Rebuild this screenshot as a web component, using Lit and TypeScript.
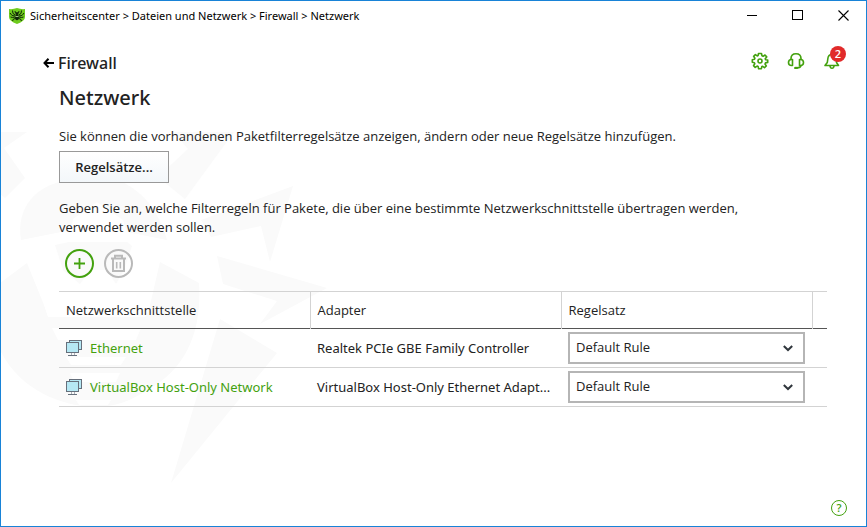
import { LitElement, html, css } from "lit";
import { customElement } from "lit/decorators.js";

interface Row { name: string; adapter: string; rule: string; }

const rows: Row[] = [
  { name: "Ethernet", adapter: "Realtek PCIe GBE Family Controller", rule: "Default Rule" },
  { name: "VirtualBox Host-Only Network", adapter: "VirtualBox Host-Only Ethernet Adapt...", rule: "Default Rule" },
];

const monitors = html`<svg viewBox="0 0 16 16" width="16" height="16" aria-hidden="true" shape-rendering="crispEdges" fill="#b5e8f4" stroke="#66707c">
  <path d="M3.5.5h12v9h-12z"/><path d="M.5 2.5h12v10h-12z"/>
  <path d="M5.5 13v2M8.5 13v2" stroke="#a9b1ba"/><path d="M2 15.5h9"/></svg>`;

const watermark = html`<svg class="mark" width="340" height="490" viewBox="0 0 340 490" aria-hidden="true">
  <path d="M0 132H27L4 148L25 178L5 198L0 194Z"/>
  <path d="M174 132H234L185 199L158 177L188 149Z"/>
  <path d="M21 240C16 207 36 187 63 181C83 174 110 174 126 184C144 194 159 211 167 240L127 232L123 220L97 202L73 219L71 230Z"/>
  <path d="M55 245L69 242H127L132 246L124 270L116 284L107 270H90L80 284L63 270Z"/>
  <path d="M0 283L27 263L44 305H150L160 262L199 283C202 330 187 368 149 389C130 402 112 407 96 407C60 406 20 390 0 350Z"/>
  <g fill="#fff"><path d="M44 305H150L146 317H48Z"/><path d="M52 328H141L136 340H58Z"/><path d="M66 357H126L121 365H71Z"/><path d="M70 373H120L116 382H74Z"/><path d="M76 400H111L108 405H79Z"/></g>
  <path d="M293 186L201 220L211 237L261 226L270 262Z"/>
  <path d="M217 256L327 288L260 324L277 301L223 284Z"/>
  <path d="M220 319L277 353L171 483Z"/>
</svg>`;

const shield = html`<svg width="16" height="16" viewBox="0 0 16 16" aria-hidden="true">
  <path d="M0 1Q4 1.500 8 0Q12 1.500 16 1V9Q16 13 8 16Q0 13 0 9Z" fill="#6ecb1d"/>
  <g stroke="#10240a" fill="none" stroke-width="1"><path d="M6.500 7L4 5.500L3.500 2.500M9.500 7L12 5.500L12.500 2.500M6 8L3 7.500L1 5M10 8L13 7.500L15 5M6 9L3.500 9.500L1.500 9M10 9L12.500 9.500L14.500 9M6.500 10.500L4.500 11L3.500 13M9.500 10.500L11.500 11L12.500 13M6.500 5L6 3M9.500 5L10 3"/></g>
  <ellipse cx="8" cy="9.500" rx="2" ry="2.800" fill="#10240a"/><circle cx="8" cy="5.500" r="1.500" fill="#10240a"/>
  <path d="M6.500 8.500H9.500" stroke="#c9f3a3" stroke-width=".8"/>
</svg>`;

const gear = html`<svg class="line" width="18" height="18" viewBox="0 0 18 18" aria-hidden="true">
  <path d="M7.500 1.500H10.500L11 3.800L12.100 4.300L14 3L15.700 4.900L14.200 6.800L14.600 7.700L16.700 8V10.400L14.500 10.900L14 12L15.300 14L13.500 15.600L11.700 14.300L10.800 14.600L10.400 16.700H7.600L7.100 14.500L6.100 14.100L4.200 15.400L2.500 13.600L3.800 11.700L3.400 10.700L1.300 10.300V7.700L3.500 7.200L3.900 6.200L2.600 4.300L4.400 2.600L6.200 3.900L7.100 3.500Z"/>
  <circle cx="9" cy="9" r="2"/></svg>`;

const headset = html`<svg class="line" width="18" height="18" viewBox="0 0 18 18" aria-hidden="true">
  <path d="M4 8V6.500C4 3.500 6 1.700 9 1.700S14 3.500 14 6.500V8"/>
  <path d="M5.500 7.500V13.500H4.500C2.500 13.500 1.500 12.200 1.500 10.500S2.500 7.500 4.500 7.500ZM12.500 7.500V13.500H13.500C15.500 13.500 16.500 12.200 16.500 10.500S15.500 7.500 13.500 7.500Z"/>
  <path d="M14 13.500Q13.500 15.800 10 15.900"/><ellipse cx="9" cy="15.900" rx="2" ry="1.200" fill="#43a10e" stroke="none"/></svg>`;

const bell = html`<svg class="line" width="18" height="18" viewBox="0 0 18 18" aria-hidden="true">
  <path d="M2 13.500H15.500L13.500 10.500V7C13.500 4 11.500 2.500 9 2.500S5 4 4.800 7L4.300 10.500Z"/>
  <path d="M7 14Q7.300 16.300 9 16.300T11 14"/></svg>`;

@customElement("app-root")
export class AppRoot extends LitElement {
  static styles = css`
    :host { display: block; font-family: "Open Sans", "Noto Sans", sans-serif; color: #222; }
    * { box-sizing: border-box; }
    svg { display: block; }
    button { font: inherit; color: inherit; background: none; border: 0; padding: 0; }
    .window { position: relative; min-height: 100vh; border: 1px solid #1883d7; background: #fff; display: flex; flex-direction: column; overflow: hidden; }
    .mark { position: absolute; left: -1px; top: -1px; fill: #fafafa; pointer-events: none; }
    .line { fill: none; stroke: #43a10e; stroke-width: 1.6; stroke-linejoin: round; }
    .titlebar { display: flex; align-items: center; height: 29px; padding-left: 8px; gap: 5px; font-family: "Noto Sans", sans-serif; font-size: 11px; color: #000; }
    .path { flex: 1; }
    .controls { display: flex; }
    .win { width: 46px; height: 28px; display: grid; place-items: center; }
    .top { display: flex; align-items: center; height: 24px; margin: 21px 25px 0 41px; }
    .back { display: flex; align-items: center; gap: 4px; font-family: "Noto Sans", sans-serif; font-size: 16px; line-height: 24px; font-weight: 500; }
    .actions { margin-left: auto; display: flex; gap: 18px; }
    .icon { position: relative; width: 18px; height: 18px; margin-bottom: 4px; }
    .badge { position: absolute; left: 7px; top: -6px; width: 16px; height: 16px; border-radius: 50%; background: #e12a2a; color: #fff; font-size: 11px; line-height: 16px; font-weight: 600; text-align: center; }
    main { position: relative; flex: 1; padding: 0 39px 0 58px; font-size: 13px; line-height: 19px; }
    h1 { margin: 7px 0 13px; font-family: "Noto Sans", sans-serif; font-size: 20px; line-height: 32px; font-weight: 500; }
    p { margin: 0; max-width: 700px; }
    .sets { display: block; margin: 5px 0 16px; width: 110px; height: 32px; border: 1px solid #999; background: linear-gradient(#fff, #f3f7fa); font-weight: 600; }
    .tools { display: flex; gap: 10px; padding: 12px 6px; }
    .tools button { width: 29px; height: 30px; }
    table { width: 100%; border-collapse: collapse; table-layout: fixed; border-top: 1px solid #d3d3d3; }
    th, .fill { height: 37px; text-align: left; font-weight: 400; padding: 0 0 0 7px; border-right: 1px solid #d3d3d3; }
    thead { border-bottom: 1px solid #555; }
    .fill, td:last-child { border-right: 0; padding: 0; }
    tbody td { height: 39px; padding: 0 0 0 7px; border-bottom: 1px solid #d3d3d3; white-space: nowrap; font-family: "Noto Sans", sans-serif; }
    td a { display: flex; align-items: center; gap: 8px; color: #43a10e; text-decoration: none; }
    .data { width: 251px; }
    .end { width: auto; }
    .pick { position: relative; display: flex; align-items: center; width: 237px; }
    select { appearance: none; width: 100%; height: 32px; border: 2px solid #b5b5b5; border-radius: 0; background: #fff; font: inherit; font-family: "Open Sans", sans-serif; color: inherit; padding: 0 6px 2px; }
    .pick svg { position: absolute; right: 12px; pointer-events: none; }
    footer { position: relative; display: flex; justify-content: flex-end; padding: 0 19px 10px; }
    .help { width: 16px; height: 16px; border: 1px solid #43a10e; border-radius: 50%; color: #43a10e; font-size: 11px; line-height: 14px; font-weight: 600; }
  `;

  render() {
    return html`<div class="window">
      ${watermark}
      <header class="titlebar">
        ${shield}<span class="path">Sicherheitscenter &gt; Dateien und Netzwerk &gt; Firewall &gt; Netzwerk</span>
        <div class="controls">
          <button class="win" aria-label="Minimieren"><svg width="11" height="11" shape-rendering="crispEdges"><path d="M1 5.500H11" stroke="#000"/></svg></button>
          <button class="win" aria-label="Maximieren"><svg width="11" height="11" shape-rendering="crispEdges"><path d="M.5.5H10.500V9.500H.5Z" fill="none" stroke="#000"/></svg></button>
          <button class="win" aria-label="Schließen"><svg width="11" height="11"><path d="M.5.500L10.500 10.500M10.500.500L.5 10.500" stroke="#000" stroke-width="1.100"/></svg></button>
        </div>
      </header>
      <nav class="top">
        <button class="back"><svg width="12" height="10" viewBox="0 0 12 10" fill="none" stroke="#000" stroke-width="2" aria-hidden="true"><path d="M6.500.8L2.500 5L6.500 9.200M2.500 5H12"/></svg>Firewall</button>
        <div class="actions">
          <button class="icon" aria-label="Einstellungen">${gear}</button>
          <button class="icon" aria-label="Support">${headset}</button>
          <button class="icon" aria-label="Benachrichtigungen">${bell}<span class="badge">2</span></button>
        </div>
      </nav>
      <main>
        <h1>Netzwerk</h1>
        <p>Sie können die vorhandenen Paketfilterregelsätze anzeigen, ändern oder neue Regelsätze hinzufügen.</p>
        <button class="sets">Regelsätze...</button>
        <p>Geben Sie an, welche Filterregeln für Pakete, die über eine bestimmte Netzwerkschnittstelle übertragen werden, verwendet werden sollen.</p>
        <div class="tools">
          <button aria-label="Hinzufügen"><svg width="29" height="30" viewBox="0 0 29 30" fill="none" stroke="#43a10e" stroke-width="2"><circle cx="14.500" cy="14.500" r="13.500"/><path d="M9 14.500H20M14.500 9V20" stroke-width="1.800"/></svg></button>
          <button aria-label="Löschen" disabled><svg width="29" height="30" viewBox="0 0 29 30" fill="none" stroke="#b9b9b9" stroke-width="2"><circle cx="14.500" cy="14.500" r="13.500"/><path d="M7 9.500H22M11 9V6.800H18V9M9 10V22H20V10"/><path d="M12.700 13V19.500M16.300 13V19.500" stroke-width="1.600"/></svg></button>
        </div>
        <table>
          <colgroup><col class="data"><col class="data"><col class="data"><col class="end"></colgroup>
          <thead><tr><th scope="col">Netzwerkschnittstelle</th><th scope="col">Adapter</th><th scope="col">Regelsatz</th><td class="fill"></td></tr></thead>
          <tbody>${rows.map(r => html`<tr>
            <td><a href="#">${monitors}${r.name}</a></td>
            <td>${r.adapter}</td>
            <td><span class="pick"><select aria-label="Regelsatz für ${r.name}"><option>${r.rule}</option></select>
              <svg width="10" height="7" viewBox="0 0 10 7" fill="none" stroke="#30363c" stroke-width="2" aria-hidden="true"><path d="M.8 1L5 5L9.200 1"/></svg></span></td>
            <td></td></tr>`)}</tbody>
        </table>
      </main>
      <footer><button class="help" aria-label="Hilfe">?</button></footer>
    </div>`;
  }
}
